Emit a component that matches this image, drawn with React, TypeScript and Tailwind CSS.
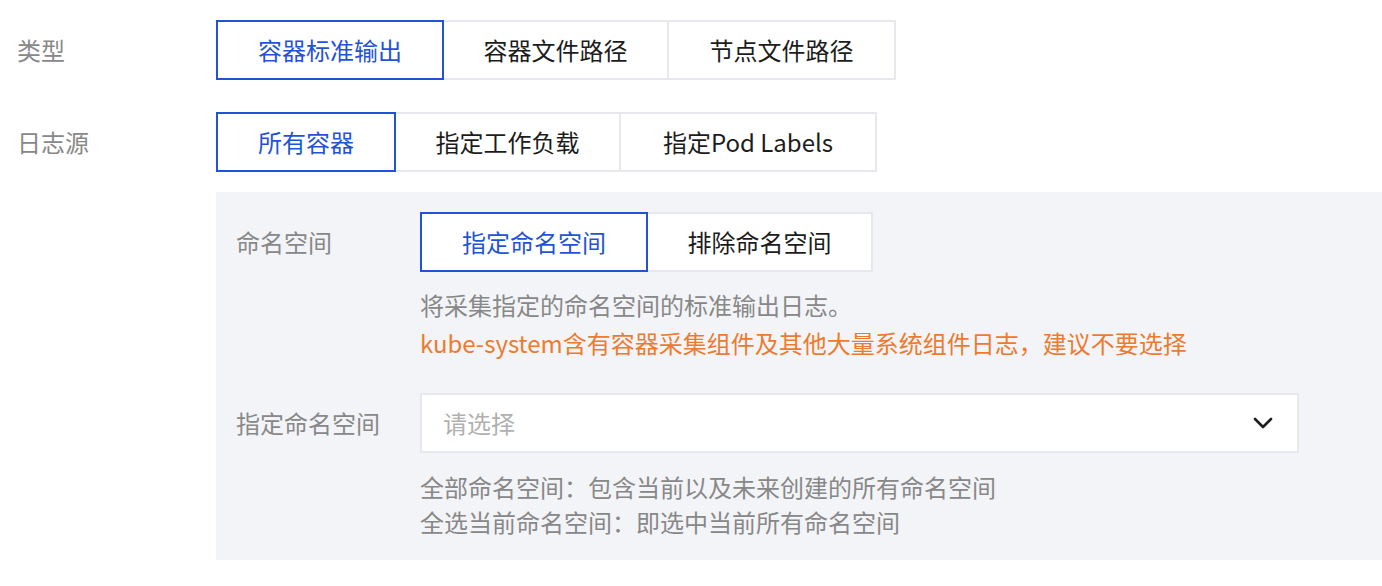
import React from 'react';

const font = "font-['Noto_Sans_CJK_SC','Noto_Sans',sans-serif]";

type TabItem = { label: string; width: string };

const TabGroup: React.FC<{ items: TabItem[]; active: number }> = ({ items, active }) => (
  <div className="flex h-[60px]">
    {items.map((item, i) => (
      <button
        key={item.label}
        className={[
          'h-full bg-white border-2 text-[24px] leading-none flex items-center justify-center',
          item.width,
          i > 0 ? '-ml-[2px]' : '',
          i === active ? 'relative z-10 border-[#1f53d8] text-[#1f53d8]' : 'border-[#e6e8ee] text-[#1c1c1c]',
        ].join(' ')}
      >
        {item.label}
      </button>
    ))}
  </div>
);

const Chevron: React.FC = () => (
  <svg width="20" height="12" viewBox="0 0 20 12" fill="none">
    <path d="M2 2l8 8 8-8" stroke="#1f1f1f" strokeWidth="2.6" strokeLinecap="round" strokeLinejoin="round" />
  </svg>
);

export default function App() {
  return (
    <div className={`w-[1382px] h-[586px] bg-white overflow-hidden ${font}`}>
      <div className="pt-[20px]">
        <div className="flex items-center">
          <div className="w-[216px] pl-[17px] text-[24px] text-[#888]">类型</div>
          <TabGroup
            active={0}
            items={[
              { label: '容器标准输出', width: 'w-[228px]' },
              { label: '容器文件路径', width: 'w-[227px]' },
              { label: '节点文件路径', width: 'w-[229px]' },
            ]}
          />
        </div>

        <div className="flex items-center mt-[32px]">
          <div className="w-[216px] pl-[17px] text-[24px] text-[#888]">日志源</div>
          <TabGroup
            active={0}
            items={[
              { label: '所有容器', width: 'w-[180px]' },
              { label: '指定工作负载', width: 'w-[227px]' },
              { label: '指定Pod Labels', width: 'w-[258px]' },
            ]}
          />
        </div>

        <div className="ml-[216px] mt-[20px] bg-[#f3f4f7] pl-[20px] pt-[20px] pb-[20px] h-[368px]">
          <div className="flex">
            <div className="w-[184px] h-[60px] flex items-center text-[24px] text-[#888]">命名空间</div>
            <div>
              <TabGroup
                active={0}
                items={[
                  { label: '指定命名空间', width: 'w-[228px]' },
                  { label: '排除命名空间', width: 'w-[227px]' },
                ]}
              />
              <div className="mt-[14px] text-[24px] leading-[38px]">
                <div className="text-[#888]">将采集指定的命名空间的标准输出日志。</div>
                <div className="text-[#ed7b2f]">kube-system含有容器采集组件及其他大量系统组件日志，建议不要选择</div>
              </div>
            </div>
          </div>

          <div className="flex mt-[31px]">
            <div className="w-[184px] h-[60px] flex items-center text-[24px] text-[#888]">指定命名空间</div>
            <div>
              <div className="w-[879px] h-[60px] bg-white border-2 border-[#e6e8ee] flex items-center justify-between pl-[21px] pr-[24px]">
                <span className="text-[24px] text-[#b0b0b0]">请选择</span>
                <Chevron />
              </div>
              <div className="mt-[16px] text-[24px] leading-[35px] text-[#888]">
                <div>全部命名空间：包含当前以及未来创建的所有命名空间</div>
                <div>全选当前命名空间：即选中当前所有命名空间</div>
              </div>
            </div>
          </div>
        </div>
      </div>
    </div>
  );
}
